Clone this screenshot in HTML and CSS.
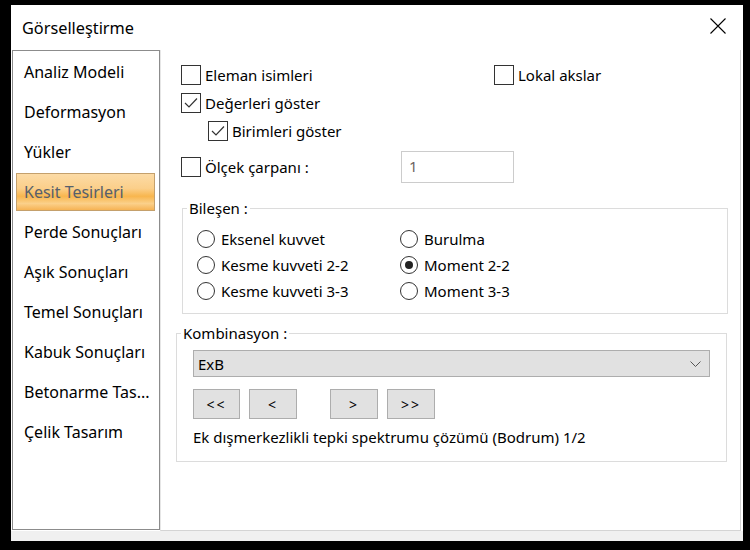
FILE: index.html
```html
<!DOCTYPE html>
<html lang="tr">
<head>
  <meta charset="UTF-8">
  <title>Görselleştirme</title>
  <link rel="stylesheet" href="styles.css">
</head>
<body>
  <div class="window">
    <div class="titlebar">
      <span class="title">Görselleştirme</span>
      <svg class="close" width="16" height="16" viewBox="0 0 16 16">
        <path d="M0.5 0.5 L15.5 15.5 M15.5 0.5 L0.5 15.5" stroke="#000" stroke-width="1.1" fill="none"/>
      </svg>
    </div>

    <div class="main">
      <ul class="nav">
        <li>Analiz Modeli</li>
        <li>Deformasyon</li>
        <li>Yükler</li>
        <li class="active">Kesit Tesirleri</li>
        <li>Perde Sonuçları</li>
        <li>Aşık Sonuçları</li>
        <li>Temel Sonuçları</li>
        <li>Kabuk Sonuçları</li>
        <li>Betonarme Tas...</li>
        <li>Çelik Tasarım</li>
      </ul>

      <div class="content">
        <div class="check-row two-col">
          <label class="check"><span class="box"></span>Eleman isimleri</label>
          <label class="check"><span class="box"></span>Lokal akslar</label>
        </div>
        <div class="check-row">
          <label class="check"><span class="box checked"><svg width="18" height="18" viewBox="0 0 18 18"><path d="M3 9 L7 13 L15 4.5" stroke="#333" stroke-width="1.2" fill="none"/></svg></span>Değerleri göster</label>
        </div>
        <div class="check-row indent">
          <label class="check"><span class="box checked"><svg width="18" height="18" viewBox="0 0 18 18"><path d="M3 9 L7 13 L15 4.5" stroke="#333" stroke-width="1.2" fill="none"/></svg></span>Birimleri göster</label>
        </div>
        <div class="check-row scale-row">
          <label class="check scale-label"><span class="box"></span>Ölçek çarpanı :</label>
          <div class="textbox">1</div>
        </div>

        <fieldset class="group bilesen">
          <legend>Bileşen :</legend>
          <div class="radios">
            <label class="radio"><span class="dot"></span>Eksenel kuvvet</label>
            <label class="radio"><span class="dot"></span>Burulma</label>
            <label class="radio"><span class="dot"></span>Kesme kuvveti 2-2</label>
            <label class="radio"><span class="dot on"></span>Moment 2-2</label>
            <label class="radio"><span class="dot"></span>Kesme kuvveti 3-3</label>
            <label class="radio"><span class="dot"></span>Moment 3-3</label>
          </div>
        </fieldset>

        <fieldset class="group kombinasyon">
          <legend>Kombinasyon :</legend>
          <div class="combo">
            <span>ExB</span>
            <svg width="11" height="6" viewBox="0 0 11 6"><path d="M0.5 0.5 L5.5 5.5 L10.5 0.5" stroke="#555" stroke-width="1" fill="none"/></svg>
          </div>
          <div class="nav-buttons">
            <button class="btn first">&lt;&lt;</button>
            <button class="btn">&lt;</button>
            <button class="btn next">&gt;</button>
            <button class="btn">&gt;&gt;</button>
          </div>
          <div class="info">Ek dışmerkezlikli tepki spektrumu çözümü (Bodrum) 1/2</div>
        </fieldset>
      </div>
    </div>

    <div class="statusbar"></div>
  </div>
</body>
</html>
```

FILE: styles.css
```css
body {
  margin: 0;
  padding: 5px 7px 9px 11px;
  background-color: #000;
  font-family: "Noto Sans", sans-serif;
  font-size: 14px;
  color: #000;
}
.window {
  width: 732px;
  height: 536px;
  background-color: #f0f0f0;
  display: flex;
  flex-direction: column;
}
.titlebar {
  height: 45px;
  background-color: #fff;
  display: flex;
  align-items: center;
  justify-content: space-between;
  padding: 0 17px 0 11px;
}
.title {
  font-size: 16.3px;
}
.close {
  margin-top: -3px;
}
.main {
  height: 481px;
  display: flex;
  background-color: #fff;
}
.nav {
  list-style: none;
  margin: 0 0 1px 1px;
  padding: 2px 0 0;
  width: 148px;
  box-sizing: border-box;
  border: 1px solid #8c8c8c;
  background-color: #fff;
}
.nav li {
  height: 38px;
  line-height: 36px;
  margin: 0 4px 2px 3px;
  padding-left: 7px;
  font-size: 16px;
  border: 1px solid transparent;
  box-sizing: border-box;
  white-space: nowrap;
}
.nav li.active {
  border-color: #c4a06c;
  color: #56606c;
  background: linear-gradient(#fcdba6 0%, #fbcf8a 40%, #f8b64e 62%, #fbd08a 82%, #f6b354 100%);
}
.content {
  flex: 1;
  margin-right: 2px;
  padding: 11px 0 0 20px;
  border-left: 1px solid #e6e6e6;
  border-right: 1px solid #d4d4d4;
  border-bottom: 1px solid #d4d4d4;
  background-color: #fff;
}
.check-row {
  height: 28px;
  display: flex;
  align-items: center;
}
.check-row.indent {
  padding-left: 27px;
}
.two-col .check:first-child {
  width: 313px;
}
.check {
  display: flex;
  align-items: center;
  font-size: 15px;
}
.box {
  width: 20px;
  height: 20px;
  box-sizing: border-box;
  border: 1px solid #333;
  margin-right: 4px;
  display: flex;
  align-items: center;
  justify-content: center;
}
.scale-row {
  height: 32px;
  margin-top: 6px;
}
.scale-label {
  width: 220px;
}
.textbox {
  width: 113px;
  height: 32px;
  box-sizing: border-box;
  border: 1px solid #cccccc;
  padding: 4px 7px;
  color: #6e6460;
  font-size: 15px;
}
.group {
  border: 1px solid #dcdcdc;
  box-sizing: border-box;
  margin: 0;
}
.group legend {
  font-size: 15px;
  line-height: 20px;
  padding: 0 2px;
}
.bilesen {
  width: 546px;
  margin: 15px 0 0 1px;
  padding: 8px 0 9px 14px;
}
.bilesen legend {
  margin-left: -10px;
}
.radios {
  display: grid;
  grid-template-columns: 203px auto;
  grid-auto-rows: 26px;
}
.radio {
  display: flex;
  align-items: center;
  font-size: 15px;
}
.dot {
  width: 18px;
  height: 18px;
  box-sizing: border-box;
  border: 1px solid #333;
  border-radius: 50%;
  margin-right: 6px;
  display: flex;
  align-items: center;
  justify-content: center;
}
.dot.on::after {
  content: "";
  width: 8px;
  height: 8px;
  border-radius: 50%;
  background-color: #222;
}
.kombinasyon {
  width: 551px;
  margin: 9px 0 0 -5px;
  padding: 7px 0 14px 16px;
}
.kombinasyon legend {
  margin-left: -12px;
}
.combo {
  width: 517px;
  height: 27px;
  box-sizing: border-box;
  border: 1px solid #adadad;
  background-color: #e1e1e1;
  display: flex;
  align-items: center;
  justify-content: space-between;
  padding: 0 8px 0 4px;
  font-size: 15px;
}
.nav-buttons {
  display: flex;
  gap: 9px;
  margin-top: 12px;
}
.btn {
  width: 48px;
  height: 30px;
  border: 1px solid #adadad;
  background-color: #e1e1e1;
  font-family: "Noto Sans", sans-serif;
  font-size: 14px;
  letter-spacing: 2px;
  padding: 0;
  color: #000;
}
.btn.first {
  width: 47px;
}
.btn.next {
  margin-left: 24px;
}
.info {
  margin-top: 8px;
  line-height: 20px;
  font-size: 15px;
}
.statusbar {
  height: 10px;
}
```
